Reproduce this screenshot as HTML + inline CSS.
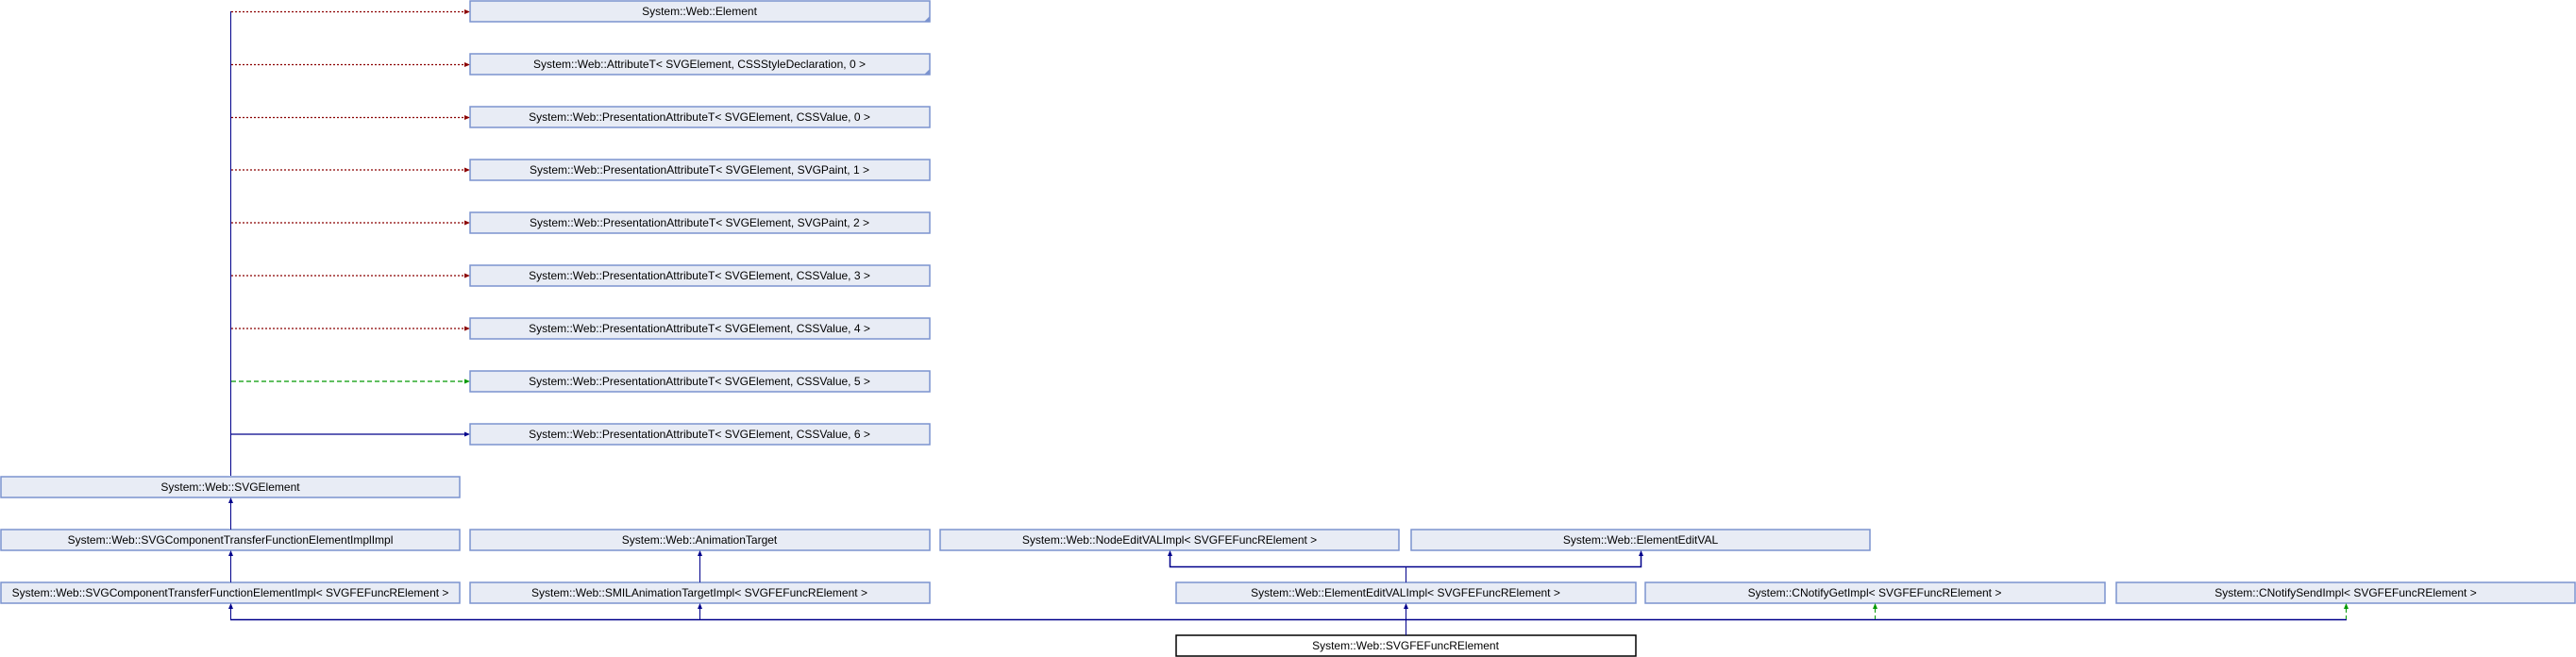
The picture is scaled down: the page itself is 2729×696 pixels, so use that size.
<!DOCTYPE html>
<html><head><meta charset="utf-8"><style>
html,body{margin:0;padding:0;background:#fff;}
svg{display:block}
text{font-family:"Liberation Sans",sans-serif;font-size:12px;fill:#000;text-anchor:middle}
.b{fill:#e8ecf5;stroke:#7b93cf;stroke-width:1.5}
</style></head><body>
<svg width="2729" height="696" viewBox="0 0 2729 696" xmlns="http://www.w3.org/2000/svg">
<!-- trunk -->
<line x1="244.5" y1="12" x2="244.5" y2="504" stroke="#00008b" stroke-width="1"/>
<!-- top edges -->
<g stroke-width="1.3">
<line x1="245" y1="12.5" x2="494" y2="12.5" stroke="#8b0000" stroke-dasharray="2,2"/>
<line x1="245" y1="68.5" x2="494" y2="68.5" stroke="#8b0000" stroke-dasharray="2,2"/>
<line x1="245" y1="124.5" x2="494" y2="124.5" stroke="#8b0000" stroke-dasharray="2,2"/>
<line x1="245" y1="180" x2="494" y2="180" stroke="#8b0000" stroke-dasharray="2,2"/>
<line x1="245" y1="236" x2="494" y2="236" stroke="#8b0000" stroke-dasharray="2,2"/>
<line x1="245" y1="292" x2="494" y2="292" stroke="#8b0000" stroke-dasharray="2,2"/>
<line x1="245" y1="348" x2="494" y2="348" stroke="#8b0000" stroke-dasharray="2,2"/>
<line x1="245" y1="404" x2="494" y2="404" stroke="#009900" stroke-dasharray="5,3"/>
<line x1="245" y1="460" x2="494" y2="460" stroke="#00008b"/>
</g>
<g>
<polygon points="498,12.5 492,10 492,15" fill="#8b0000"/>
<polygon points="498,68.5 492,66 492,71" fill="#8b0000"/>
<polygon points="498,124.5 492,122 492,127" fill="#8b0000"/>
<polygon points="498,180 492,177.5 492,182.5" fill="#8b0000"/>
<polygon points="498,236 492,233.5 492,238.5" fill="#8b0000"/>
<polygon points="498,292 492,289.5 492,294.5" fill="#8b0000"/>
<polygon points="498,348 492,345.5 492,350.5" fill="#8b0000"/>
<polygon points="498,404 492,401.5 492,406.5" fill="#009900"/>
<polygon points="498,460 492,457.5 492,462.5" fill="#00008b"/>
</g>
<!-- top boxes -->
<g>
<rect class="b" x="498" y="1" width="487" height="22"/><text x="741" y="16">System::Web::Element</text>
<polygon points="985,17 985,23 979,23" fill="#7b93cf"/>
<rect class="b" x="498" y="57" width="487" height="22"/><text x="741" y="72">System::Web::AttributeT&lt; SVGElement, CSSStyleDeclaration, 0 &gt;</text>
<polygon points="985,73 985,79 979,79" fill="#7b93cf"/>
<rect class="b" x="498" y="113" width="487" height="22"/><text x="741" y="128">System::Web::PresentationAttributeT&lt; SVGElement, CSSValue, 0 &gt;</text>
<rect class="b" x="498" y="169" width="487" height="22"/><text x="741" y="184">System::Web::PresentationAttributeT&lt; SVGElement, SVGPaint, 1 &gt;</text>
<rect class="b" x="498" y="225" width="487" height="22"/><text x="741" y="240">System::Web::PresentationAttributeT&lt; SVGElement, SVGPaint, 2 &gt;</text>
<rect class="b" x="498" y="281" width="487" height="22"/><text x="741" y="296">System::Web::PresentationAttributeT&lt; SVGElement, CSSValue, 3 &gt;</text>
<rect class="b" x="498" y="337" width="487" height="22"/><text x="741" y="352">System::Web::PresentationAttributeT&lt; SVGElement, CSSValue, 4 &gt;</text>
<rect class="b" x="498" y="393" width="487" height="22"/><text x="741" y="408">System::Web::PresentationAttributeT&lt; SVGElement, CSSValue, 5 &gt;</text>
<rect class="b" x="498" y="449" width="487" height="22"/><text x="741" y="464">System::Web::PresentationAttributeT&lt; SVGElement, CSSValue, 6 &gt;</text>
</g>
<!-- lower boxes -->
<rect class="b" x="1" y="505" width="486" height="22"/><text x="244" y="520">System::Web::SVGElement</text>
<rect class="b" x="1" y="561" width="486" height="22"/><text x="244" y="576">System::Web::SVGComponentTransferFunctionElementImplImpl</text>
<rect class="b" x="498" y="561" width="487" height="22"/><text x="741" y="576">System::Web::AnimationTarget</text>
<rect class="b" x="996" y="561" width="486" height="22"/><text x="1239" y="576">System::Web::NodeEditVALImpl&lt; SVGFEFuncRElement &gt;</text>
<rect class="b" x="1495" y="561" width="486" height="22"/><text x="1738" y="576">System::Web::ElementEditVAL</text>
<rect class="b" x="1" y="617" width="486" height="22"/><text x="244" y="632">System::Web::SVGComponentTransferFunctionElementImpl&lt; SVGFEFuncRElement &gt;</text>
<rect class="b" x="498" y="617" width="487" height="22"/><text x="741" y="632">System::Web::SMILAnimationTargetImpl&lt; SVGFEFuncRElement &gt;</text>
<rect class="b" x="1246" y="617" width="487" height="22"/><text x="1489" y="632">System::Web::ElementEditVALImpl&lt; SVGFEFuncRElement &gt;</text>
<rect class="b" x="1743" y="617" width="487" height="22"/><text x="1986" y="632">System::CNotifyGetImpl&lt; SVGFEFuncRElement &gt;</text>
<rect class="b" x="2242" y="617" width="486" height="22"/><text x="2485" y="632">System::CNotifySendImpl&lt; SVGFEFuncRElement &gt;</text>
<rect x="1246" y="673" width="487" height="22" fill="#fff" stroke="#000" stroke-width="1.5"/><text x="1489" y="688">System::Web::SVGFEFuncRElement</text>
<!-- lower edges -->
<g stroke="#00008b" stroke-width="1" fill="none">
<line x1="244.5" y1="533" x2="244.5" y2="561"/>
<line x1="244.5" y1="589" x2="244.5" y2="617"/>
<line x1="741.5" y1="589" x2="741.5" y2="617"/>
<line x1="244.5" y1="645" x2="244.5" y2="656"/>
<line x1="741.5" y1="645" x2="741.5" y2="656"/>
<line x1="1489.5" y1="645" x2="1489.5" y2="673"/>
<line x1="1489.5" y1="600" x2="1489.5" y2="617"/>
<path d="M1239.5,589 V600.5 H1738.5 V589" stroke-width="1.5"/>
<line x1="244" y1="656.5" x2="2486" y2="656.5" stroke-width="1.5"/>
</g>
<g stroke="#009900" stroke-dasharray="4,3" stroke-width="1">
<line x1="1986.5" y1="645" x2="1986.5" y2="656"/>
<line x1="2485.5" y1="645" x2="2485.5" y2="656"/>
</g>
<g fill="#00008b">
<polygon points="244.5,527 242,533 247,533"/>
<polygon points="244.5,583 242,589 247,589"/>
<polygon points="741.5,583 739,589 744,589"/>
<polygon points="244.5,639 242,645 247,645"/>
<polygon points="741.5,639 739,645 744,645"/>
<polygon points="1489.5,639 1487,645 1492,645"/>
<polygon points="1239.5,583 1237,589 1242,589"/>
<polygon points="1738.5,583 1736,589 1741,589"/>
</g>
<g fill="#009900">
<polygon points="1986.5,639 1984,645 1989,645"/>
<polygon points="2485.5,639 2483,645 2488,645"/>
</g>
</svg>
</body></html>
